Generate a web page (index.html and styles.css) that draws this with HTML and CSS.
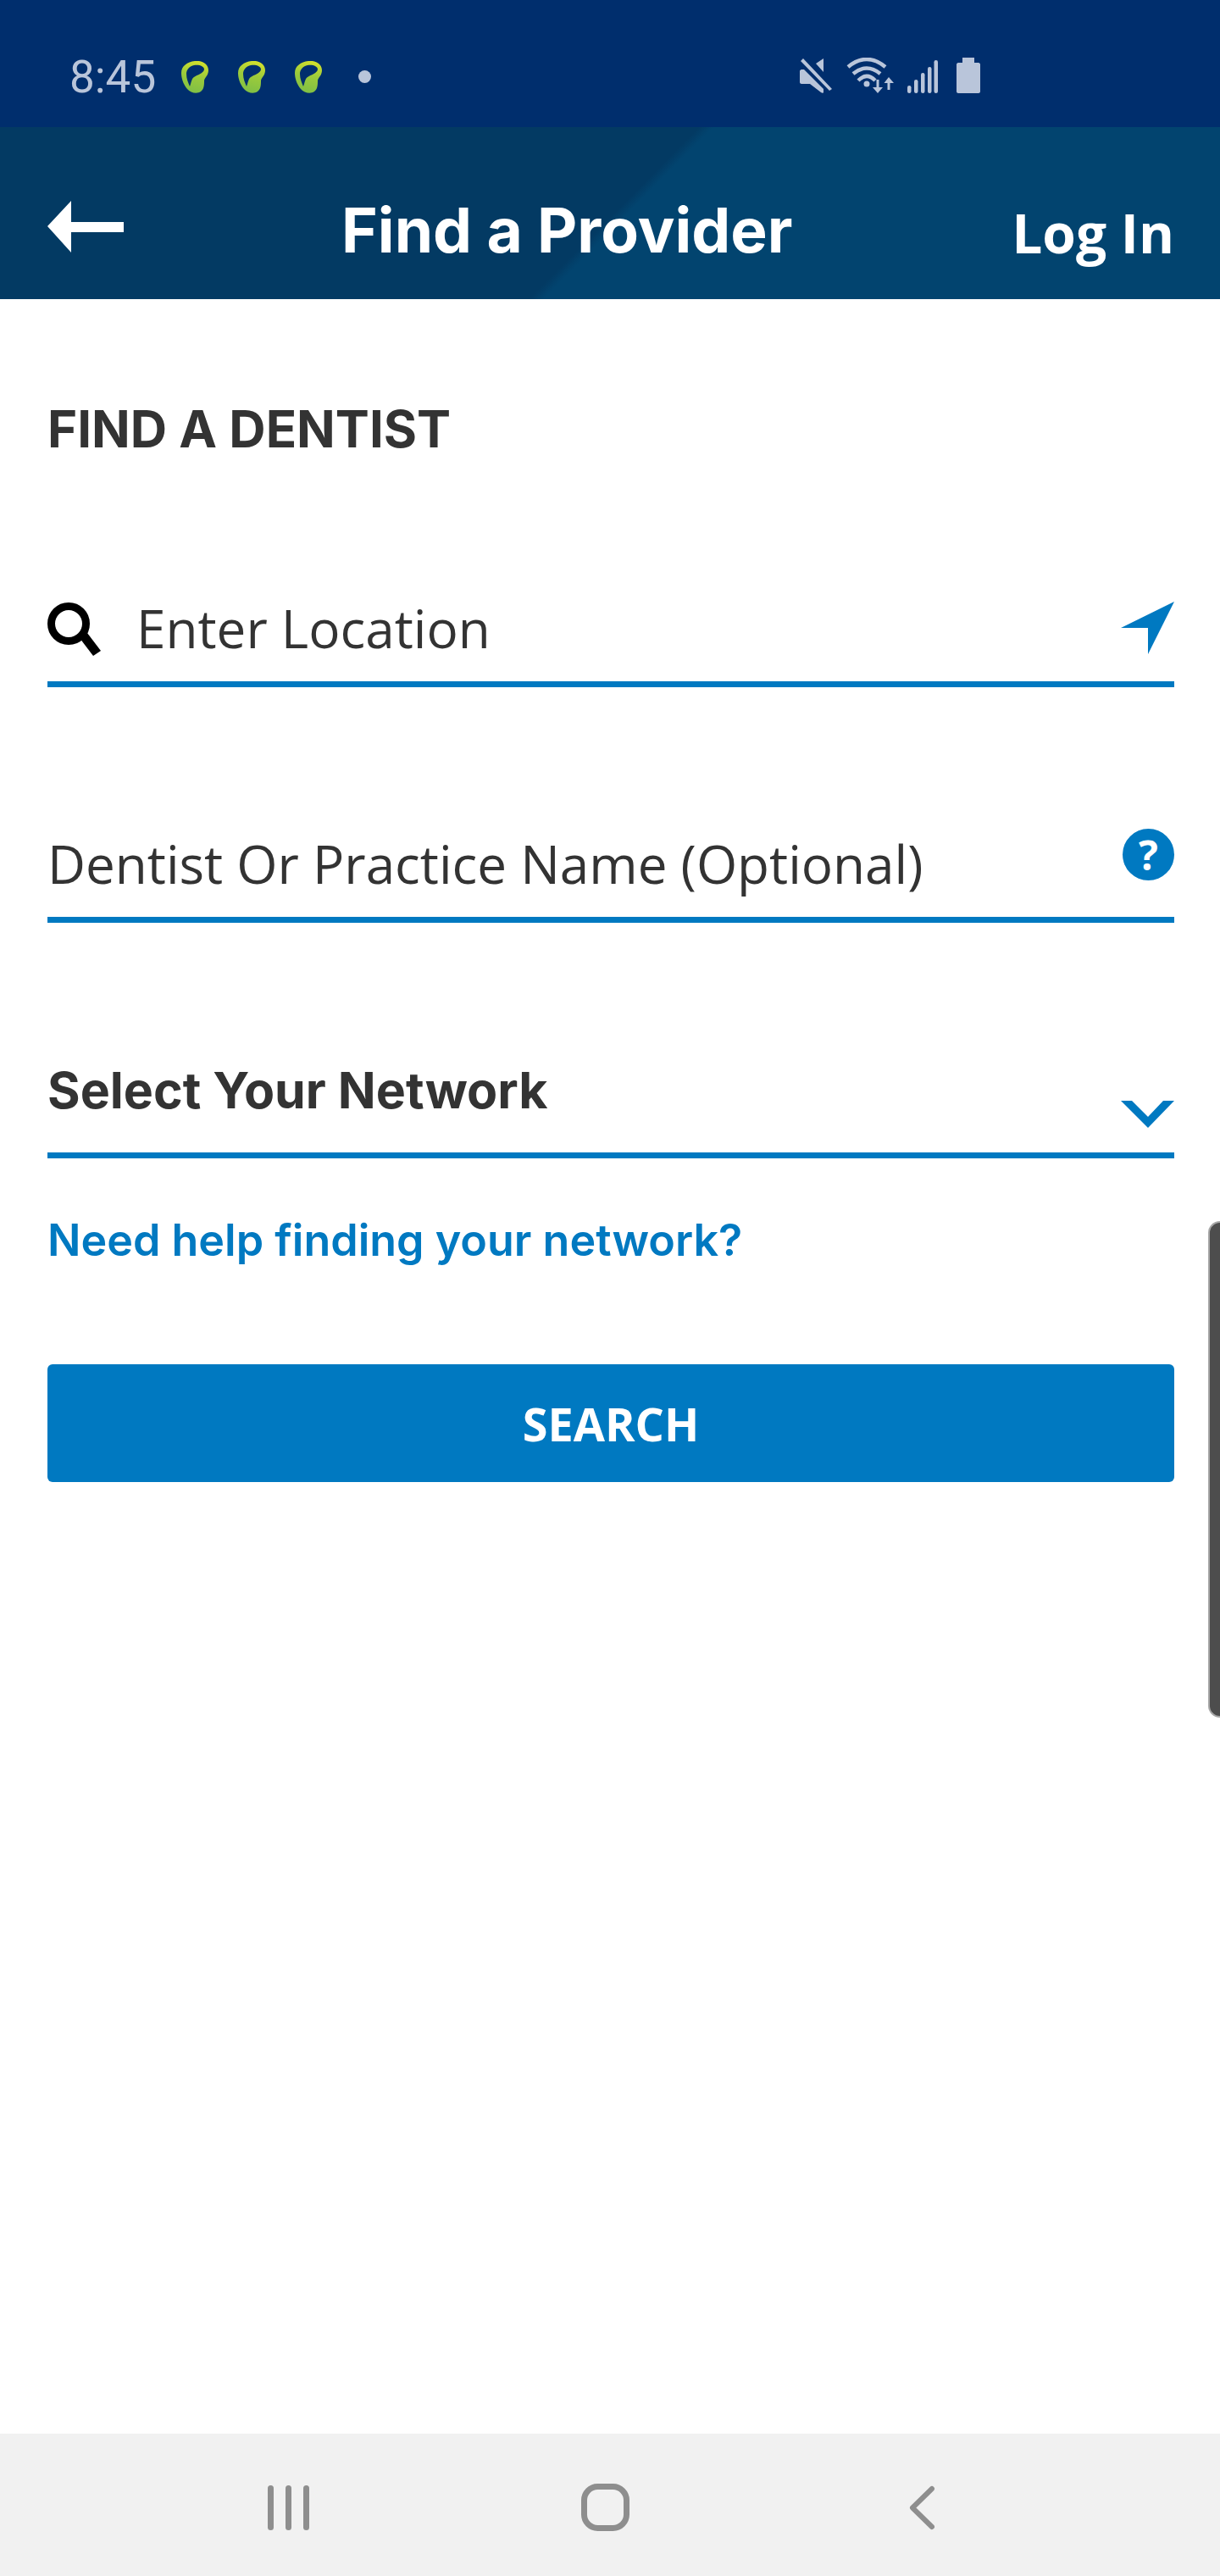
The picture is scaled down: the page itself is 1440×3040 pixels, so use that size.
FILE: index.html
```html
<!DOCTYPE html>
<html lang="en">
<head>
    <meta charset="UTF-8">
    <title>Find a Provider</title>
    <link rel="stylesheet" href="styles.css">
</head>
<body>
    <div class="phone">
        <svg class="defs" width="0" height="0">
            <defs>
                <linearGradient id="leafGrad" x1="0.6" y1="0" x2="0.4" y2="1">
                    <stop offset="0" stop-color="#d3e02c"/>
                    <stop offset="0.45" stop-color="#9ccb3b"/>
                    <stop offset="1" stop-color="#7fbf45"/>
                </linearGradient>
            </defs>
        </svg>

        <div class="status-bar">
            <span class="clock">8:45</span>
            <div class="notifications">
                <svg class="leaf" viewBox="0 0 32 38"><path d="M16 0C24 -1 32 3 32 11C32 17 28 19 27 23C27 28 27 33 23 36C19 39 11 38 7 33C2 27 0 20 0 14C0 6 7 1 16 0ZM15 5C10 6 6 10 6 15C6 21 8 25 10 30C12 25 12 21 15 19C19 16 26 15 27 10C27 6 21 4 15 5Z" fill-rule="evenodd"/></svg>
                <svg class="leaf" viewBox="0 0 32 38"><path d="M16 0C24 -1 32 3 32 11C32 17 28 19 27 23C27 28 27 33 23 36C19 39 11 38 7 33C2 27 0 20 0 14C0 6 7 1 16 0ZM15 5C10 6 6 10 6 15C6 21 8 25 10 30C12 25 12 21 15 19C19 16 26 15 27 10C27 6 21 4 15 5Z" fill-rule="evenodd"/></svg>
                <svg class="leaf" viewBox="0 0 32 38"><path d="M16 0C24 -1 32 3 32 11C32 17 28 19 27 23C27 28 27 33 23 36C19 39 11 38 7 33C2 27 0 20 0 14C0 6 7 1 16 0ZM15 5C10 6 6 10 6 15C6 21 8 25 10 30C12 25 12 21 15 19C19 16 26 15 27 10C27 6 21 4 15 5Z" fill-rule="evenodd"/></svg>
                <span class="dot"></span>
            </div>
            <div class="system-icons">
                <svg class="sys mute" viewBox="0 0 40 42"><path d="M28 1L19 7L28 17ZM1 4L4 1L38 37L35 39ZM2 14H5L28 37V41C28 42 26 42 25 41L12 31H2C1 31 0 30 0 29V16C0 15 1 14 2 14Z"/></svg>
                <svg class="sys wifi" viewBox="0 0 57 42">
                    <path d="M2 11Q24 -7 46 11M8 19Q24 6 40 19M14 27Q24 17 34 27" fill="none" stroke-width="4.5"/>
                    <circle cx="24" cy="31" r="3.500" class="sys-fill"/>
                    <path d="M35.500 26H38.500V35H43L37 42L31 35H35.500ZM48.500 38V30H44.500L50 23L56 30H51.500V38Z" class="sys-fill"/>
                </svg>
                <svg class="sys signal" viewBox="0 0 36 39"><rect x="0" y="30" width="4.500" height="9" rx="2.200"/><rect x="8" y="23" width="4.500" height="16" rx="2.200"/><rect x="16" y="15" width="4.500" height="24" rx="2.200"/><rect x="24" y="8" width="4.500" height="31" rx="2.200"/><rect x="31.500" y="0" width="4.500" height="39" rx="2.200"/></svg>
                <svg class="sys battery" viewBox="0 0 28 42"><path d="M7 0H21V6H26C27 6 28 7 28 8V40C28 41 27 42 26 42H2C1 42 0 41 0 40V8C0 7 1 6 2 6H7Z"/></svg>
            </div>
        </div>

        <header class="app-bar">
            <svg class="back-arrow" viewBox="0 0 90 61"><path d="M28 0V25H90V37H28V61L0 30Z"/></svg>
            <h1 class="app-title">Find a Provider</h1>
            <span class="login">Log In</span>
        </header>

        <main class="content">
            <h2 class="section-title">FIND A DENTIST</h2>

            <div class="field field-location">
                <svg class="search-icon" viewBox="0 0 63 63"><circle cx="25" cy="25" r="20.500" fill="none" stroke-width="9"/><path d="M38 42L47 36L63 57L54 63Z" class="solid"/></svg>
                <span class="field-text">Enter Location</span>
                <svg class="locate-icon" viewBox="0 0 63 62"><path d="M63 0L32 62V31H0Z"/></svg>
            </div>

            <div class="field field-name">
                <span class="field-text">Dentist Or Practice Name (Optional)</span>
                <span class="help-icon">?</span>
            </div>

            <div class="field field-network">
                <span class="network-label">Select Your Network</span>
                <svg class="chevron-icon" viewBox="0 0 63 32"><path d="M0 0H13L32 19L50 0H63L32 32Z"/></svg>
            </div>

            <a class="help-link" href="#">Need help finding your network?</a>

            <button class="search-button">SEARCH</button>
        </main>

        <div class="scroll-handle"></div>

        <nav class="nav-bar">
            <svg class="nav-recent" viewBox="0 0 49 53"><rect x="0" width="7" height="53" rx="3.500"/><rect x="21" width="7" height="53" rx="3.500"/><rect x="42" width="7" height="53" rx="3.500"/></svg>
            <svg class="nav-home" viewBox="0 0 57 56"><rect x="3.500" y="3.500" width="50" height="49" rx="16" fill="none" stroke-width="7"/></svg>
            <svg class="nav-back" viewBox="0 0 31 53"><path d="M27 4L4 26.500L27 49" fill="none" stroke-width="6" stroke-linecap="round" stroke-linejoin="round"/></svg>
        </nav>
    </div>
</body>
</html>
```

FILE: styles.css
```css
* {
    box-sizing: border-box;
}

body {
    margin: 0;
    background: #fff;
    font-family: 'Open Sans', sans-serif;
    color: #333;
}

.phone {
    position: relative;
    width: 1440px;
    height: 3040px;
    display: flex;
    flex-direction: column;
    overflow: hidden;
}

.defs {
    position: absolute;
}

/* status bar */
.status-bar {
    height: 150px;
    background: #002e6d;
    display: flex;
    align-items: center;
    padding: 28px 283px 0 82px;
}

.clock {
    font-family: Roboto, sans-serif;
    font-size: 53px;
    color: #b9c5da;
    width: 132px;
    margin-top: 4px;
}

.notifications {
    display: flex;
    align-items: center;
    gap: 35px;
}

.leaf {
    width: 32px;
    height: 38px;
    fill: url(#leafGrad);
    margin-top: 4px;
}

.dot {
    width: 15px;
    height: 15px;
    border-radius: 50%;
    background: #b9c5da;
    margin-left: 8px;
    margin-top: 2px;
}

.system-icons {
    margin-left: auto;
    display: flex;
    align-items: flex-end;
    height: 42px;
}

.sys {
    fill: #b9c5da;
    stroke: #b9c5da;
    stroke-width: 0;
}

.sys .sys-fill {
    stroke: none;
}

.mute {
    width: 40px;
    height: 42px;
    margin-right: 15px;
}

.wifi {
    width: 57px;
    height: 42px;
    margin-right: 15px;
}

.signal {
    width: 36px;
    height: 39px;
    margin-right: 22px;
}

.battery {
    width: 28px;
    height: 42px;
}

/* app bar */
.app-bar {
    position: relative;
    height: 203px;
    background: linear-gradient(134.700deg, #033a63 0, #033a63 50.300%, #02446f 51.300%, #02446f 100%);
    color: #fff;
}

.back-arrow {
    position: absolute;
    left: 56px;
    top: 87px;
    width: 90px;
    height: 61px;
    fill: #fff;
}

.app-title {
    position: absolute;
    left: 403px;
    top: 78px;
    margin: 0;
    font-family: Inter, sans-serif;
    font-size: 73px;
    font-weight: 700;
    line-height: 88px;
}

.login {
    position: absolute;
    right: 54px;
    top: 84px;
    font-size: 64px;
    font-weight: 700;
    line-height: 82px;
}

/* form */
.content {
    flex: 1;
    padding: 0 54px 0 56px;
    display: flex;
    flex-direction: column;
}

.section-title {
    margin: 118px 0 0;
    font-family: Inter, sans-serif;
    font-size: 60px;
    font-weight: 700;
    line-height: 70px;
}

.field {
    position: relative;
    height: 146px;
    border-bottom: 7px solid #0079c1;
    display: flex;
    align-items: center;
}

.field-location {
    margin-top: 124px;
    padding-top: 13px;
}

.field-name {
    margin-top: 132px;
    padding-top: 13px;
}

.field-network {
    margin-top: 132px;
    padding-bottom: 8px;
}

.field-text {
    font-size: 62px;
    line-height: 82px;
}

.search-icon {
    width: 63px;
    height: 63px;
    stroke: #000;
    margin-right: 42px;
    margin-top: 3px;
}

.search-icon .solid {
    stroke: none;
    fill: #000;
}

.locate-icon {
    position: absolute;
    right: 0;
    top: 45px;
    width: 63px;
    height: 62px;
    fill: #0079c1;
}

.help-icon {
    position: absolute;
    right: 0;
    top: 35px;
    width: 61px;
    height: 61px;
    border-radius: 50%;
    background: #0079c1;
    color: #fff;
    font-size: 48px;
    font-weight: 700;
    line-height: 61px;
    text-align: center;
}

.network-label {
    font-family: Inter, sans-serif;
    font-size: 59px;
    font-weight: 700;
}

.chevron-icon {
    position: absolute;
    right: 0;
    top: 78px;
    width: 63px;
    height: 32px;
    fill: #0079c1;
}

.help-link {
    margin-top: 62px;
    color: #0079c1;
    font-family: Inter, sans-serif;
    font-size: 52px;
    font-weight: 600;
    line-height: 70px;
    text-decoration: none;
}

.search-button {
    margin-top: 111px;
    height: 139px;
    border: none;
    border-radius: 6px;
    background: #0079c1;
    color: #fff;
    font-family: 'Open Sans', sans-serif;
    font-size: 54px;
    font-weight: 700;
}

.scroll-handle {
    position: absolute;
    right: 0;
    top: 1441px;
    width: 14px;
    height: 586px;
    background: #4d4d4d;
    border: 2px solid #a6a6a6;
    border-right: none;
    border-radius: 14px 0 0 14px;
}

/* android nav */
.nav-bar {
    height: 168px;
    background: #f1f1f1;
    position: relative;
    flex-shrink: 0;
}

.nav-bar svg {
    position: absolute;
    fill: #8e8e8e;
    stroke: #8e8e8e;
    stroke-width: 0;
}

.nav-recent {
    left: 316px;
    top: 61px;
    width: 49px;
    height: 53px;
}

.nav-home {
    left: 686px;
    top: 59px;
    width: 57px;
    height: 56px;
}

.nav-back {
    left: 1073px;
    top: 61px;
    width: 31px;
    height: 53px;
}
```
